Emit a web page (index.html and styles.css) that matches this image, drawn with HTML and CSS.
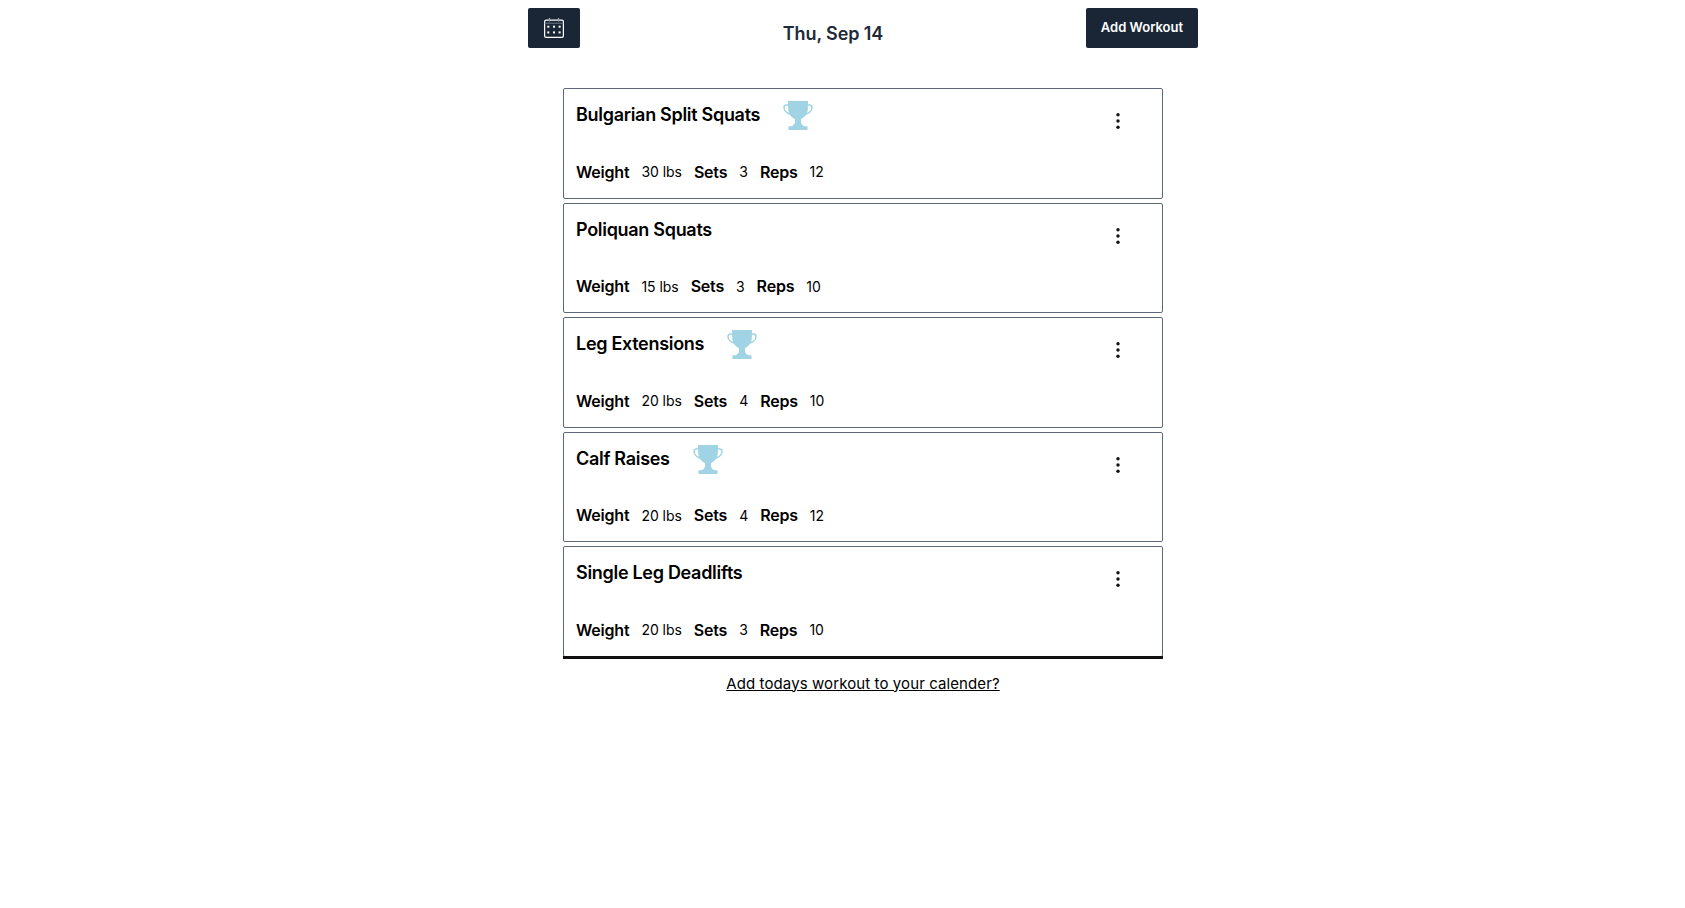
FILE: index.html
```html
<!DOCTYPE html>
<html>
  <head>
    <title>Workouts</title>
    <meta name="viewport" content="width=device-width, initial-scale=1.0">
    <link rel="stylesheet" href="styles.css">
  </head>
  <body>
    <main>
      <header class="topbar">
        <button class="btn btn-icon" aria-label="Open calendar">
          <svg width="22" height="22" viewBox="0 0 22 22" fill="none" stroke="#fff" stroke-width="1.2">
            <rect x="1.6" y="3.2" width="18.8" height="17.2" rx="1.6"/>
            <path d="M6.5 1v3.6M15.5 1v3.6" stroke="#9aa3af" stroke-width="1.4"/>
            <path d="M1.6 6.2h18.8" stroke="#6f7988" stroke-width="1"/>
            <g fill="#fff" stroke="none">
              <rect x="4.3" y="8.7" width="2" height="2"/>
              <rect x="10" y="8.7" width="2" height="2"/>
              <rect x="15.600" y="8.7" width="2" height="2"/>
              <rect x="4.3" y="14.400" width="2" height="2"/>
              <rect x="10" y="14.400" width="2" height="2"/>
              <rect x="15.600" y="14.400" width="2" height="2"/>
            </g>
          </svg>
        </button>
        <h2 class="date">Thu, Sep 14</h2>
        <button class="btn btn-text">Add Workout</button>
      </header>

      <section class="list">
        <article class="card">
          <div class="card-top">
            <h3>Bulgarian Split Squats</h3>
            <svg class="trophy" width="30" height="30" viewBox="0 0 30 30"><use href="#trophy"/></svg>
            <svg class="kebab" width="20" height="20" viewBox="0 0 20 20"><use href="#kebab"/></svg>
          </div>
          <div class="stats">
            <b>Weight</b><span>30 lbs</span><b>Sets</b><span>3</span><b>Reps</b><span>12</span>
          </div>
        </article>
        <article class="card">
          <div class="card-top">
            <h3>Poliquan Squats</h3>
            <svg class="kebab" width="20" height="20" viewBox="0 0 20 20"><use href="#kebab"/></svg>
          </div>
          <div class="stats">
            <b>Weight</b><span>15 lbs</span><b>Sets</b><span>3</span><b>Reps</b><span>10</span>
          </div>
        </article>
        <article class="card">
          <div class="card-top">
            <h3>Leg Extensions</h3>
            <svg class="trophy" width="30" height="30" viewBox="0 0 30 30"><use href="#trophy"/></svg>
            <svg class="kebab" width="20" height="20" viewBox="0 0 20 20"><use href="#kebab"/></svg>
          </div>
          <div class="stats">
            <b>Weight</b><span>20 lbs</span><b>Sets</b><span>4</span><b>Reps</b><span>10</span>
          </div>
        </article>
        <article class="card">
          <div class="card-top">
            <h3>Calf Raises</h3>
            <svg class="trophy" width="30" height="30" viewBox="0 0 30 30"><use href="#trophy"/></svg>
            <svg class="kebab" width="20" height="20" viewBox="0 0 20 20"><use href="#kebab"/></svg>
          </div>
          <div class="stats">
            <b>Weight</b><span>20 lbs</span><b>Sets</b><span>4</span><b>Reps</b><span>12</span>
          </div>
        </article>
        <article class="card">
          <div class="card-top">
            <h3>Single Leg Deadlifts</h3>
            <svg class="kebab" width="20" height="20" viewBox="0 0 20 20"><use href="#kebab"/></svg>
          </div>
          <div class="stats">
            <b>Weight</b><span>20 lbs</span><b>Sets</b><span>3</span><b>Reps</b><span>10</span>
          </div>
        </article>
        <hr class="rule">
        <a class="cal-link" href="#">Add todays workout to your calender?</a>
      </section>
    </main>

    <svg width="0" height="0" class="defs">
      <symbol id="trophy" viewBox="0 0 30 30">
        <path fill="#a0d3e3" d="M5 0H25L24.800 8C24.500 13.500 21 17 18 18V21C18 22.500 19.500 24.500 21.500 25.300H24.500V29H5.500V25.300H8.500C10.500 24.500 12 22.500 12 21V18C9 17 5.500 13.500 5.200 8Z"/>
        <path fill="none" stroke="#a0d3e3" stroke-width="1.500" d="M6 4H3.500C1.800 4 1 5 1 6.500 1 9.500 4 12.300 8 13.300M24 4H26.500C28.200 4 29 5 29 6.500 29 9.500 26 12.300 22 13.300"/>
      </symbol>
      <symbol id="kebab" viewBox="0 0 20 20">
        <circle cx="10" cy="3.700" r="1.700" fill="#111"/>
        <circle cx="10" cy="10" r="1.700" fill="#111"/>
        <circle cx="10" cy="16.300" r="1.700" fill="#111"/>
      </symbol>
    </svg>
  </body>
</html>
```

FILE: styles.css
```css
* {
  margin: 0;
  padding: 0;
  box-sizing: border-box;
  font-family: Inter, "Liberation Sans", sans-serif;
}
body {
  color: #000;
  background: #fff;
}
main {
  width: 670px;
  margin: 8px auto 0 528px;
}
.topbar {
  display: flex;
  justify-content: space-between;
  align-items: flex-start;
  height: 80px;
}
.btn {
  height: 40px;
  border: 0;
  border-radius: 2px;
  background: #1a2535;
  color: #fff;
  font-size: 13px;
  font-weight: 600;
}
.btn-icon {
  display: flex;
  align-items: center;
  justify-content: center;
  width: 52px;
}
.btn-text {
  width: 112px;
  padding-bottom: 2px;
}
.date {
  margin-top: 15px;
  color: #1f2937;
  font-size: 18px;
  line-height: 22px;
  font-weight: 600;
  letter-spacing: -0.1px;
}
.list {
  display: flex;
  flex-direction: column;
  gap: 4px;
  width: 600px;
  margin-left: 35px;
}
.card {
  height: 110.5px;
  padding: 13px 11px 0 12px;
  border: 1px solid #5f6878;
  border-radius: 2px;
}
.card-top {
  display: flex;
  align-items: flex-start;
  height: 57.5px;
}
.card-top h3 {
  font-size: 18px;
  line-height: 26px;
  font-weight: 600;
  letter-spacing: -0.3px;
  color: #000;
}
.trophy {
  margin: -1px 0 0 23px;
}
.kebab {
  margin: 9px 23px 0 auto;
}
.stats {
  display: flex;
  align-items: center;
  gap: 12px;
  height: 24px;
}
.stats b {
  font-size: 16px;
  font-weight: 600;
  letter-spacing: -0.2px;
}
.stats span {
  font-size: 14px;
  letter-spacing: -0.05px;
}
.rule {
  height: 3px;
  margin-top: -5px;
  border: 0;
  background: #111;
}
.cal-link {
  margin-top: 9px;
  color: #000;
  font-size: 15px;
  line-height: 24px;
  letter-spacing: 0.1px;
  text-align: center;
}
.defs {
  position: absolute;
}
```
